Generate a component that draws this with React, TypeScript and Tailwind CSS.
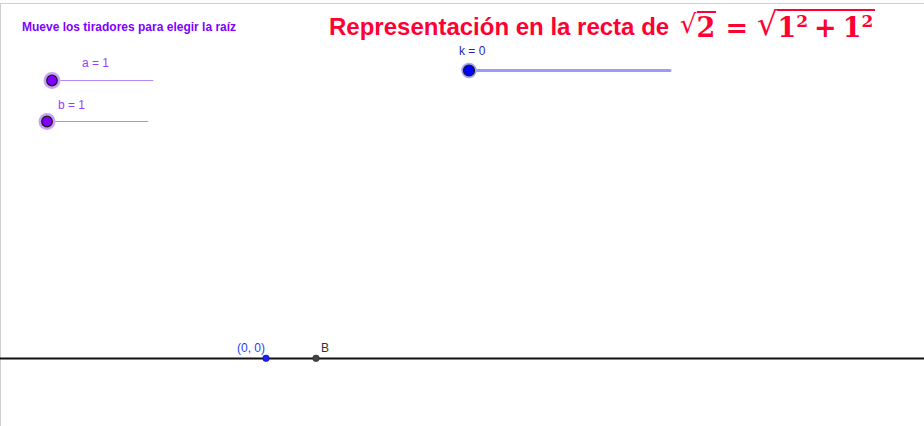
import React from 'react';

const sans = { fontFamily: '"Liberation Sans", Arial, sans-serif' };
const serif = { fontFamily: '"DejaVu Serif", "Liberation Serif", serif' };

interface SliderProps {
  cx: number;
  cy: number;
  x2: number;
  line: string;
  lineWidth: number;
  halo: string;
  fill: string;
  haloR: number;
  r: number;
}

const Slider: React.FC<SliderProps> = ({ cx, cy, x2, line, lineWidth, halo, fill, haloR, r }) => (
  <g>
    <line x1={cx} y1={cy} x2={x2} y2={cy} stroke={line} strokeWidth={lineWidth} strokeLinecap="round" />
    <circle cx={cx} cy={cy} r={haloR} fill={halo} />
    <circle cx={cx} cy={cy} r={r} fill={fill} stroke="#1a1a1a" strokeWidth={1.2} />
  </g>
);

export default function App() {
  return (
    <div className="w-full h-[426px] bg-white overflow-hidden">
      <div className="relative mt-[3px] h-[423px] border-t border-l border-[#cfcfcf]" style={sans}>
        <svg className="absolute left-[-1px] top-[-4px]" width="926" height="430">
          <Slider cx={52} cy={80.5} x2={153} line="#b48cf0" lineWidth={1} halo="#c9a3f5" fill="#7f00ff" haloR={8.5} r={5.3} />
          <Slider cx={47} cy={121.5} x2={148} line="#b48cf0" lineWidth={1} halo="#c9a3f5" fill="#7f00ff" haloR={8.5} r={5.3} />
          <Slider cx={469} cy={70.5} x2={670} line="#9a9af7" lineWidth={3} halo="#a3a3f5" fill="#0000ff" haloR={7.8} r={5.5} />
          <line x1={0} y1={358.5} x2={926} y2={358.5} stroke="#111" strokeWidth={2.2} />
          <circle cx={266} cy={358.3} r={3.3} fill="#1c1cff" stroke="#0b0b7a" strokeWidth={0.6} />
          <circle cx={316} cy={358.3} r={3.3} fill="#444" stroke="#222" strokeWidth={0.6} />
        </svg>

        <div className="absolute left-[21px] top-[17px] text-[12px] leading-none font-bold text-[#8000ff] whitespace-nowrap">
          Mueve los tiradores para elegir la raíz
        </div>
        <div className="absolute left-[81px] top-[53px] text-[12px] leading-none text-[#9a3cff] whitespace-nowrap">a = 1</div>
        <div className="absolute left-[57px] top-[95px] text-[12px] leading-none text-[#9a3cff] whitespace-nowrap">b = 1</div>
        <div className="absolute left-[458px] top-[41px] text-[12px] leading-none text-[#1f1fb8] whitespace-nowrap">k = 0</div>
        <div className="absolute left-[236px] top-[338px] text-[12px] leading-none text-[#1f3df5] whitespace-nowrap">(0, 0)</div>
        <div className="absolute left-[320px] top-[338px] text-[12px] leading-none text-[#333] whitespace-nowrap">B</div>

        <div className="absolute left-[328px] top-[11px] text-[24px] leading-none font-bold text-[#ff0033] whitespace-nowrap">
          Representación en la recta de
        </div>

        <div className="absolute left-[679px] top-[2px] flex items-start font-bold text-[#ff0033] leading-none whitespace-nowrap" style={serif}>
          <span className="text-[26px] font-normal mt-[5px]">√</span>
          <span className="text-[27px] border-t-[2px] border-[#ff0033] mt-[5px] pt-[1px] pr-[1px]">2</span>
          <span className="text-[27px] ml-[9px] mt-[8px]">=</span>
          <span className="text-[32px] font-normal ml-[9px] mt-[2px]">√</span>
          <span className="flex items-start text-[27px] border-t-[2px] border-[#ff0033] mt-[3px] pt-[3px] pr-[2px]">
            <span>1</span>
            <span className="text-[17px] mt-[-1px]">2</span>
            <span className="mx-[6px]">+</span>
            <span>1</span>
            <span className="text-[17px] mt-[-1px]">2</span>
          </span>
        </div>
      </div>
    </div>
  );
}
